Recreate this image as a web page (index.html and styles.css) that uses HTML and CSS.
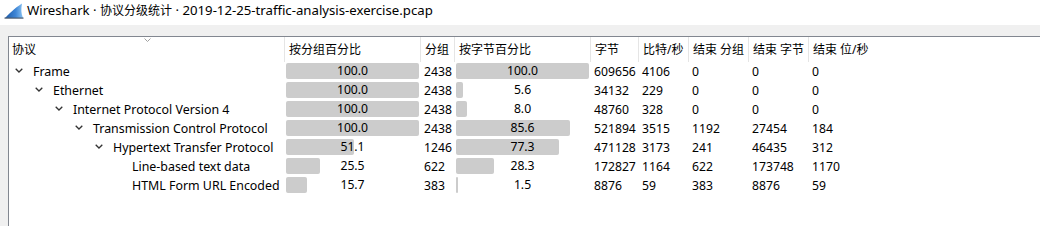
FILE: index.html
```html
<!DOCTYPE html>
<html>
<head>
<meta charset="utf-8">
<link rel="stylesheet" href="styles.css">
</head>
<body>
<div class="titlebar">
  <svg class="logo" width="20" height="16" viewBox="0 0 20 16">
    <defs>
      <linearGradient id="fin" x1="0" y1="0" x2="1" y2="0">
        <stop offset="0" stop-color="#1c5aa8"/>
        <stop offset="0.6" stop-color="#3f86d6"/>
        <stop offset="1" stop-color="#8cc4f2"/>
      </linearGradient>
    </defs>
    <path d="M1,15 C5,11 10,5.5 18,0.5 C17,6 17,10.5 19,15 Z" fill="url(#fin)"/>
    <rect x="0.5" y="14.5" width="19" height="1.2" fill="#4a5a6e"/>
  </svg>
  <span class="title">Wireshark · <span class="cjk">协议分级统计</span> · 2019-12-25-traffic-analysis-exercise.pcap</span>
</div>
<div class="frame">
  <div class="table">
    <div class="row head">
      <div class="hc first">协议<svg class="sort" width="7" height="4" viewBox="0 0 7 4"><polyline points="0.5,0.5 3.5,3.5 6.5,0.5" fill="none" stroke="#a0a0a0" stroke-width="1"/></svg></div>
      <div class="hc">按分组百分比</div>
      <div class="hc">分组</div>
      <div class="hc">按字节百分比</div>
      <div class="hc">字节</div>
      <div class="hc">比特/秒</div>
      <div class="hc">结束 分组</div>
      <div class="hc">结束 字节</div>
      <div class="hc last">结束 位/秒</div>
    </div>

    <div class="row">
      <div class="tree l0"><svg class="chev" width="8" height="5" viewBox="0 0 8 5"><polyline points="0.7,0.7 4,4 7.3,0.7" fill="none" stroke="#333" stroke-width="1.3"/></svg><span>Frame</span></div>
      <div class="pct"><div class="bar" style="width:100%"></div><span class="val">100.0</span></div>
      <div class="num">2438</div>
      <div class="pct"><div class="bar" style="width:100%"></div><span class="val">100.0</span></div>
      <div class="num">609656</div>
      <div class="num">4106</div>
      <div class="num">0</div>
      <div class="num">0</div>
      <div class="num">0</div>
    </div>

    <div class="row">
      <div class="tree l1"><svg class="chev" width="8" height="5" viewBox="0 0 8 5"><polyline points="0.7,0.7 4,4 7.3,0.7" fill="none" stroke="#333" stroke-width="1.3"/></svg><span>Ethernet</span></div>
      <div class="pct"><div class="bar" style="width:100%"></div><span class="val">100.0</span></div>
      <div class="num">2438</div>
      <div class="pct"><div class="bar" style="width:5.6%"></div><span class="val">5.6</span></div>
      <div class="num">34132</div>
      <div class="num">229</div>
      <div class="num">0</div>
      <div class="num">0</div>
      <div class="num">0</div>
    </div>

    <div class="row">
      <div class="tree l2"><svg class="chev" width="8" height="5" viewBox="0 0 8 5"><polyline points="0.7,0.7 4,4 7.3,0.7" fill="none" stroke="#333" stroke-width="1.3"/></svg><span>Internet Protocol Version 4</span></div>
      <div class="pct"><div class="bar" style="width:100%"></div><span class="val">100.0</span></div>
      <div class="num">2438</div>
      <div class="pct"><div class="bar" style="width:8%"></div><span class="val">8.0</span></div>
      <div class="num">48760</div>
      <div class="num">328</div>
      <div class="num">0</div>
      <div class="num">0</div>
      <div class="num">0</div>
    </div>

    <div class="row">
      <div class="tree l3"><svg class="chev" width="8" height="5" viewBox="0 0 8 5"><polyline points="0.7,0.7 4,4 7.3,0.7" fill="none" stroke="#333" stroke-width="1.3"/></svg><span>Transmission Control Protocol</span></div>
      <div class="pct"><div class="bar" style="width:100%"></div><span class="val">100.0</span></div>
      <div class="num">2438</div>
      <div class="pct"><div class="bar" style="width:85.6%"></div><span class="val">85.6</span></div>
      <div class="num">521894</div>
      <div class="num">3515</div>
      <div class="num">1192</div>
      <div class="num">27454</div>
      <div class="num">184</div>
    </div>

    <div class="row">
      <div class="tree l4"><svg class="chev" width="8" height="5" viewBox="0 0 8 5"><polyline points="0.7,0.7 4,4 7.3,0.7" fill="none" stroke="#333" stroke-width="1.3"/></svg><span>Hypertext Transfer Protocol</span></div>
      <div class="pct"><div class="bar" style="width:51.1%"></div><span class="val">51.1</span></div>
      <div class="num">1246</div>
      <div class="pct"><div class="bar" style="width:77.3%"></div><span class="val">77.3</span></div>
      <div class="num">471128</div>
      <div class="num">3173</div>
      <div class="num">241</div>
      <div class="num">46435</div>
      <div class="num">312</div>
    </div>

    <div class="row">
      <div class="tree l5"><span>Line-based text data</span></div>
      <div class="pct"><div class="bar" style="width:25.5%"></div><span class="val">25.5</span></div>
      <div class="num">622</div>
      <div class="pct"><div class="bar" style="width:28.3%"></div><span class="val">28.3</span></div>
      <div class="num">172827</div>
      <div class="num">1164</div>
      <div class="num">622</div>
      <div class="num">173748</div>
      <div class="num">1170</div>
    </div>

    <div class="row">
      <div class="tree l5"><span>HTML Form URL Encoded</span></div>
      <div class="pct"><div class="bar" style="width:15.7%"></div><span class="val">15.7</span></div>
      <div class="num">383</div>
      <div class="pct"><div class="bar" style="width:1.5%"></div><span class="val">1.5</span></div>
      <div class="num">8876</div>
      <div class="num">59</div>
      <div class="num">383</div>
      <div class="num">8876</div>
      <div class="num">59</div>
    </div>
  </div>
</div>
</body>
</html>
```

FILE: styles.css
```css
* { box-sizing: border-box; }
html, body {
  margin: 0;
  padding: 0;
  width: 1040px;
  height: 226px;
  overflow: hidden;
  background: #ffffff;
  font-family: "Noto Sans", "Noto Sans CJK SC", sans-serif;
  font-size: 12px;
  color: #000;
}
.titlebar {
  height: 25px;
  display: flex;
  align-items: flex-start;
  padding-top: 3px;
  background: #ffffff;
}
.logo {
  margin-left: 4px;
  flex: none;
}
.title {
  margin-left: 3px;
  line-height: 15px;
  font-size: 13.2px;
  white-space: nowrap;
}
.title .cjk {
  font-size: 12px;
}
.frame {
  background: #f0f0f0;
  padding: 11px 0 0 8px;
  height: 201px;
}
.table {
  background: #ffffff;
  border-top: 1px solid #828790;
  border-left: 1px solid #828790;
  height: 100%;
}
.row {
  display: grid;
  grid-template-columns: 276px 136px 34px 136px 48px 50px 60px 60px 1fr;
  height: 19px;
  line-height: 19px;
  white-space: nowrap;
  font-size: 12.2px;
}
.row.head {
  height: 25px;
  line-height: 25px;
  font-size: 12px;
}
.hc {
  border-right: 1px solid #e5e5e5;
  padding-left: 4px;
}
.hc.first {
  padding-left: 3px;
  position: relative;
}
.hc.last { border-right: none; }
.sort {
  position: absolute;
  left: 135px;
  top: 1px;
}
.tree {
  display: flex;
  align-items: center;
  font-size: 12.4px;
}
.chev {
  flex: none;
  margin-right: 10px;
  margin-top: -2px;
}
.l0 { padding-left: 6px; }
.l1 { padding-left: 26px; }
.l2 { padding-left: 46px; }
.l3 { padding-left: 66px; }
.l4 { padding-left: 86px; }
.l5 { padding-left: 123px; }
.pct {
  display: grid;
  padding: 1px 2px 2px 1px;
}
.bar {
  grid-area: 1 / 1;
  height: 16px;
  background: #cccccc;
  border-radius: 2px;
  justify-self: start;
}
.val {
  grid-area: 1 / 1;
  justify-self: center;
  line-height: 16px;
  position: relative;
}
.num {
  padding-left: 3px;
}
```
